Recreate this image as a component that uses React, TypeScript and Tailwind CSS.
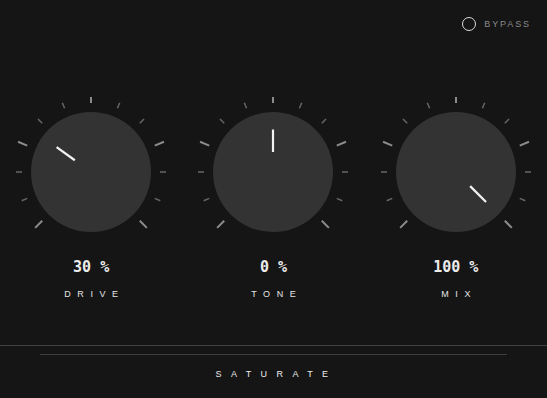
import React from "react";

const TICKS = Array.from({ length: 13 }, (_, i) => -135 + i * 22.5);

function Knob({ value, angle, label }: { value: number; angle: number; label: string }) {
  const rad = (a: number) => (a * Math.PI) / 180;
  const pt = (a: number, r: number) => [Math.sin(rad(a)) * r, -Math.cos(rad(a)) * r];
  const [px1, py1] = pt(angle, 20);
  const [px2, py2] = pt(angle, 42.5);
  return (
    <div className="flex flex-col items-center">
      <svg width="150" height="150" viewBox="-75 -75 150 150" className="block">
        {TICKS.map((a, i) => {
          const major = i % 3 === 0;
          const [x1, y1] = pt(a, 69);
          const [x2, y2] = pt(a, major ? 79 : 75);
          return (
            <line
              key={i}
              x1={x1}
              y1={y1}
              x2={x2}
              y2={y2}
              stroke={major ? "#8c8c8c" : "#666666"}
              strokeWidth={major ? 2 : 1.5}
            />
          );
        })}
        <circle cx="0" cy="0" r="60" fill="#333333" />
        <line x1={px1} y1={py1} x2={px2} y2={py2} stroke="#f2f2f2" strokeWidth="2.2" />
      </svg>
      <div
        className="mt-[10px] h-[20px] leading-[20px] text-[15px] font-bold text-[#ececec]"
        style={{ fontFamily: '"DejaVu Sans Mono", monospace' }}
      >
        {value} %
      </div>
      <div
        className="mt-[11px] h-[12px] leading-[12px] text-[9px] text-[#e4e4e4] tracking-[6.6px] pl-[6.6px]"
        style={{ fontFamily: '"Liberation Sans", Arial, sans-serif' }}
      >
        {label}
      </div>
    </div>
  );
}

export default function App() {
  return (
    <div
      className="w-full h-[398px] bg-[#151515] flex flex-col overflow-hidden"
      style={{ fontFamily: '"Liberation Sans", Arial, sans-serif' }}
    >
      <div className="flex justify-end items-center pt-[17px] pr-[16px] h-[31px]">
        <div className="flex items-center gap-[8px]">
          <div className="w-[14px] h-[14px] rounded-full border-[1.5px] border-[#dcdcdc]" />
          <span className="text-[9px] leading-[12px] tracking-[1.9px] text-[#8a8a8a]">BYPASS</span>
        </div>
      </div>
      <div className="grid grid-cols-3 mt-[66px]">
        <Knob value={30} angle={-54} label="DRIVE" />
        <Knob value={0} angle={0} label="TONE" />
        <Knob value={100} angle={135} label="MIX" />
      </div>
      <div className="mt-auto h-[53px] border-t border-[#414141] flex flex-col">
        <div className="mt-[8px] mx-[40px] h-px bg-[#3e3e3e]" />
        <div className="mt-[13px] h-[12px] leading-[12px] text-center text-[9px] text-[#ececec] tracking-[9.4px] pl-[6px]">
          SATURATE
        </div>
      </div>
    </div>
  );
}
